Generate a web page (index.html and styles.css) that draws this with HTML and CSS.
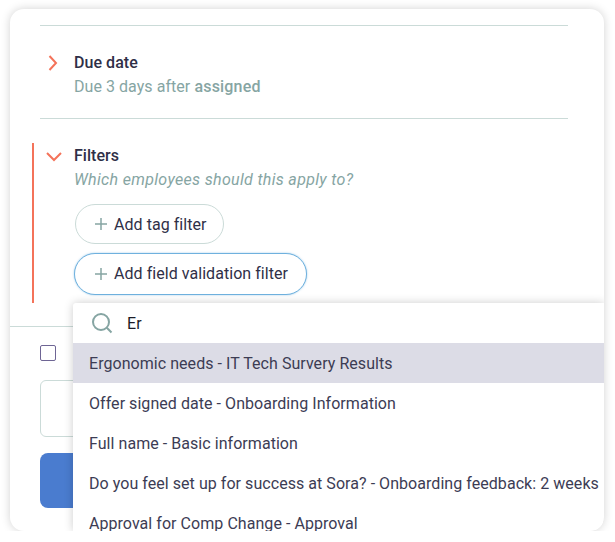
FILE: index.html
```html
<!DOCTYPE html>
<html lang="en">
<head>
    <meta charset="UTF-8">
    <meta name="viewport" content="width=device-width, initial-scale=1.0">
    <title>Task settings</title>
    <link rel="stylesheet" href="styles.css">
</head>
<body>
    <div class="card">
        <div class="settings">
            <!-- Due date -->
            <div class="section">
                <svg class="chevron" width="12" height="16" viewBox="0 0 12 16"><path d="M1.5 1 L8 8 L1.5 15"/></svg>
                <div class="section-body">
                    <h3>Due date</h3>
                    <p class="hint">Due 3 days after <b>assigned</b></p>
                </div>
            </div>

            <!-- Filters -->
            <div class="section section-open">
                <svg class="chevron" width="16" height="12" viewBox="0 0 16 12"><path d="M1 2 L8 9 L15 2"/></svg>
                <div class="section-body">
                    <h3>Filters</h3>
                    <p class="hint hint-italic">Which employees should this apply to?</p>
                    <div class="filter-buttons">
                        <button class="pill">
                            <svg width="14" height="14" viewBox="0 0 14 14"><path d="M7 1 V13 M1 7 H13"/></svg>
                            Add tag filter
                        </button>
                        <button class="pill pill-active">
                            <svg width="14" height="14" viewBox="0 0 14 14"><path d="M7 1 V13 M1 7 H13"/></svg>
                            Add field validation filter
                        </button>
                    </div>
                </div>
            </div>
        </div>

        <div class="footer">
            <input type="checkbox" class="check">
            <div class="text-box"></div>
            <div class="save-btn"></div>
        </div>

        <!-- Field search dropdown -->
        <div class="dropdown">
            <div class="search-row">
                <svg width="22" height="22" viewBox="0 0 22 22"><circle cx="10" cy="10" r="8"/><path d="M15.8 15.8 L20.5 20.5"/></svg>
                <span>Er</span>
            </div>
            <ul class="options">
                <li class="selected">Ergonomic needs - IT Tech Survery Results</li>
                <li>Offer signed date - Onboarding Information</li>
                <li>Full name - Basic information</li>
                <li>Do you feel set up for success at Sora? - Onboarding feedback: 2 weeks</li>
                <li>Approval for Comp Change - Approval</li>
            </ul>
        </div>
    </div>
</body>
</html>
```

FILE: styles.css
```css
body {
    font-family: Roboto, Arial, sans-serif;
    letter-spacing: 0.05px;
    background-color: #fff;
    color: #2f2f47;
    margin: 0;
    padding: 0;
}

.card {
    position: relative;
    width: 594px;
    height: 522px;
    margin: 9px 0 0 10px;
    background-color: #fff;
    border-radius: 14px;
    box-shadow: 0 0 10px rgba(0, 0, 0, 0.18);
    overflow: hidden;
}

.settings {
    margin: 16px 36px 0 30px;
    border-top: 1px solid #cbdbd8;
}

.section {
    display: flex;
    border-bottom: 1px solid #cbdbd8;
    padding: 27px 0 19px 8px;
    height: 46px;
}

.section-open {
    border-bottom: none;
    margin: 24px 0 0 -8px;
    padding: 0 0 0 12px;
    height: 160px;
    border-left: 2px solid #f4735a;
}

.chevron {
    flex: none;
    margin-top: 2px;
    fill: none;
    stroke: #f4735a;
    stroke-width: 2;
}

.section > .chevron {
    margin-right: 14px;
}

.section-open > .chevron {
    margin: 8px 12px 0 0;
}

h3 {
    font-size: 16px;
    font-weight: 500;
    line-height: 20px;
    margin: 0;
}

.section-open h3 {
    margin-top: 3px;
}

.hint {
    font-size: 16px;
    line-height: 20px;
    margin: 4px 0 0 0;
    color: #86a5a3;
}

.hint b {
    font-weight: 500;
    letter-spacing: 0.2px;
}

.hint-italic {
    font-style: italic;
    letter-spacing: 0.33px;
}

.filter-buttons {
    display: flex;
    flex-direction: column;
    align-items: flex-start;
    gap: 9px;
    margin-top: 14px;
}

.pill {
    display: flex;
    align-items: center;
    gap: 6px;
    height: 40px;
    margin-left: 1px;
    padding: 0 16px 0 18px;
    font-family: inherit;
    font-size: 16px;
    letter-spacing: inherit;
    color: #2f2f47;
    background-color: #fff;
    border: 1px solid #cbdbd8;
    border-radius: 20px;
}

.pill svg {
    fill: none;
    stroke: #86a5a3;
    stroke-width: 1.5;
}

.pill-active {
    height: 42px;
    margin-left: 0;
    padding: 0 18px 2px 19px;
    border: 1.5px solid #6fb1de;
    border-radius: 21px;
    box-shadow: 0 0 2px rgba(111, 177, 222, 0.7);
}

.pill-active svg {
    margin-top: 2px;
}

.footer {
    margin-top: 23px;
    border-top: 1px solid #cbdbd8;
    padding: 18px 30px 0 30px;
}

.check {
    display: block;
    width: 16px;
    height: 16px;
    margin: 0;
    appearance: none;
    background-color: #fff;
    border: 1px solid #6e6594;
    border-radius: 2px;
}

.text-box {
    height: 55px;
    margin-top: 19px;
    border: 1px solid #cbdbd8;
    border-radius: 6px;
}

.save-btn {
    height: 55px;
    margin-top: 16px;
    background-color: #4a7ccf;
    border-radius: 8px;
}

.dropdown {
    position: absolute;
    top: 294px;
    left: 63px;
    right: 0;
    bottom: 0;
    background-color: #fff;
    border-radius: 3px 0 0 0;
    box-shadow: 0 0 10px rgba(0, 0, 0, 0.2);
    overflow: hidden;
}

.search-row {
    display: flex;
    align-items: center;
    height: 40px;
    padding-left: 18px;
    font-size: 16px;
    color: #1c1c28;
}

.search-row svg {
    flex: none;
    margin-right: 14px;
    fill: none;
    stroke: #86a5a3;
    stroke-width: 2;
}

.options {
    list-style: none;
    margin: 0;
    padding: 0;
}

.options li {
    height: 40px;
    line-height: 42px;
    padding-left: 16px;
    font-size: 16px;
    white-space: nowrap;
    color: #3c3c54;
}

.options .selected {
    background-color: #dcdce6;
}
```
